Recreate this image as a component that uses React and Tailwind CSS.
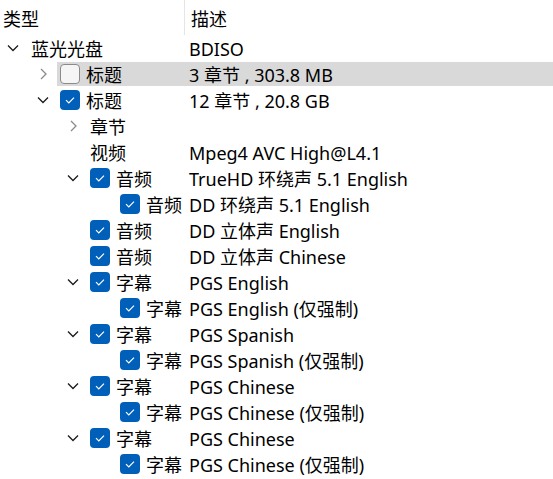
import React from "react";

const rows = [
  { l: 0, ch: "open", name: "蓝光光盘", desc: "BDISO" },
  { l: 1, ch: "closed", cb: "off", name: "标题", desc: "3 章节 , 303.8 MB", sel: true },
  { l: 1, ch: "open", cb: "on", name: "标题", desc: "12 章节 , 20.8 GB" },
  { l: 2, ch: "closed", name: "章节", desc: "" },
  { l: 2, name: "视频", desc: "Mpeg4 AVC High@L4.1" },
  { l: 2, ch: "open", cb: "on", name: "音频", desc: "TrueHD 环绕声 5.1 English" },
  { l: 3, cb: "on", name: "音频", desc: "DD 环绕声 5.1 English" },
  { l: 2, cb: "on", name: "音频", desc: "DD 立体声 English" },
  { l: 2, cb: "on", name: "音频", desc: "DD 立体声 Chinese" },
  { l: 2, ch: "open", cb: "on", name: "字幕", desc: "PGS English" },
  { l: 3, cb: "on", name: "字幕", desc: "PGS English (仅强制)" },
  { l: 2, ch: "open", cb: "on", name: "字幕", desc: "PGS Spanish" },
  { l: 3, cb: "on", name: "字幕", desc: "PGS Spanish (仅强制)" },
  { l: 2, ch: "open", cb: "on", name: "字幕", desc: "PGS Chinese" },
  { l: 3, cb: "on", name: "字幕", desc: "PGS Chinese (仅强制)" },
  { l: 2, ch: "open", cb: "on", name: "字幕", desc: "PGS Chinese" },
  { l: 3, cb: "on", name: "字幕", desc: "PGS Chinese (仅强制)" },
];

const indentCls = ["w-[27px]", "w-[57px]", "w-[87px]", "w-[117px]"];
const nameCls = ["w-[157px] pl-[4px]", "w-[127px] pl-[3px]", "w-[97px] pl-[3px]", "w-[67px] pl-[3px]"];
const chevPos = ["pl-[7px]", "pl-[37px]", "pl-[67px]", "pl-[97px]"];

function Chevron({ kind }) {
  if (kind === "open") {
    return (
      <svg width="12" height="8" viewBox="0 0 12 8" className="block">
        <path d="M1 1.5 L6 6.5 L11 1.5" fill="none" stroke="#1b1b1b" strokeWidth="1.3" />
      </svg>
    );
  }
  return (
    <svg width="12" height="12" viewBox="0 0 12 12" className="block">
      <path d="M4 1 L9 6 L4 11" fill="none" stroke="#8a8a8a" strokeWidth="1.3" />
    </svg>
  );
}

function Checkbox({ on }) {
  if (on) {
    return (
      <div className="w-[20px] h-[20px] rounded-[4px] bg-[#005fb8] flex items-center justify-center shrink-0">
        <svg width="12" height="10" viewBox="0 0 12 10">
          <path d="M2 5.2 L4.8 8 L10 2.6" fill="none" stroke="#ffffff" strokeWidth="1.2" />
        </svg>
      </div>
    );
  }
  return <div className="w-[20px] h-[20px] rounded-[4px] bg-[#f5f5f5] border border-[#8b8b8b] shrink-0" />;
}

export default function App() {
  return (
    <div
      className="w-[553px] h-[479px] bg-white text-[#000000] text-[18px] overflow-hidden"
      style={{ fontFamily: '"Noto Sans", "Noto Sans CJK SC", sans-serif' }}
    >
      <div className="flex h-[35px] leading-none">
        <div className="w-[184px] pl-[3px] pt-[3px] flex items-center">类型</div>
        <div className="w-[1px] h-full bg-[#e5e5e5]" />
        <div className="pl-[6px] pt-[3px] flex items-center">描述</div>
      </div>
      {rows.map((r, i) => (
        <div key={i} className="flex h-[26px] items-stretch leading-none">
          <div className={`${indentCls[r.l]} shrink-0 flex items-center`}>
            {r.ch ? (
              <div className={`${chevPos[r.l]} flex items-center`}>
                <Chevron kind={r.ch} />
              </div>
            ) : null}
          </div>
          <div className={`flex-1 flex items-center my-[1px] ${r.sel ? "bg-[#d9d9d9]" : ""}`}>
            <div className={`${nameCls[r.l]} shrink-0 flex items-center whitespace-nowrap`}>
              {r.cb ? <Checkbox on={r.cb === "on"} /> : null}
              <span className={`pt-[2px] ${r.cb ? "ml-[6px]" : ""}`}>{r.name}</span>
            </div>
            <div className="pl-[5px] pt-[2px] whitespace-nowrap">{r.desc}</div>
          </div>
        </div>
      ))}
    </div>
  );
}
